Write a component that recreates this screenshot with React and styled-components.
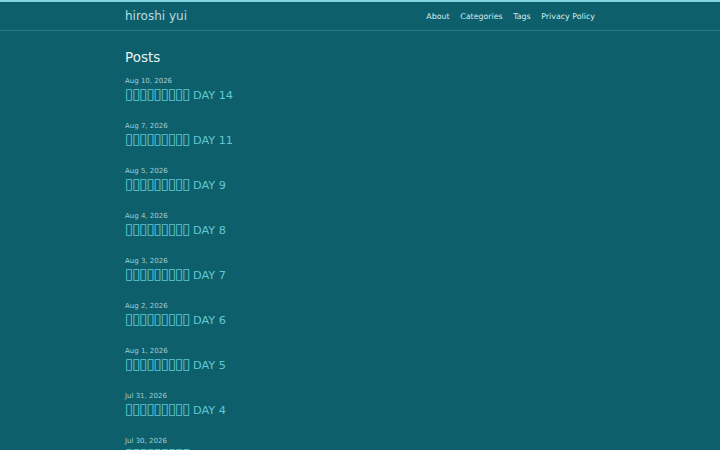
import styled, { createGlobalStyle } from "styled-components";

const posts = [
    { date: "Aug 10, 2026", day: 14 },
    { date: "Aug 7, 2026", day: 11 },
    { date: "Aug 5, 2026", day: 9 },
    { date: "Aug 4, 2026", day: 8 },
    { date: "Aug 3, 2026", day: 7 },
    { date: "Aug 2, 2026", day: 6 },
    { date: "Aug 1, 2026", day: 5 },
    { date: "Jul 31, 2026", day: 4 },
    { date: "Jul 30, 2026", day: 3 },
];

const menu = ["About", "Categories", "Tags", "Privacy Policy"];

export default function App() {
    return (
        <Page>
            <GlobalStyle />
            <Header>
                <HeaderInner>
                    <SiteTitle>hiroshi yui</SiteTitle>
                    <Nav>
                        {menu.map((item) => (
                            <NavLink key={item} href="#">{item}</NavLink>
                        ))}
                    </Nav>
                </HeaderInner>
            </Header>
            <Main>
                <Heading>Posts</Heading>
                <PostList>
                    {posts.map((p) => (
                        <Post key={p.date}>
                            <PostDate>{p.date}</PostDate>
                            <PostTitle href="#">
                                <Tofu>▯▯▯▯▯▯▯▯▯</Tofu> DAY {p.day}
                            </PostTitle>
                        </Post>
                    ))}
                </PostList>
            </Main>
        </Page>
    );
}

const GlobalStyle = createGlobalStyle`
    html, body {
        margin: 0;
        padding: 0;
        background: #0d5f6b;
    }
    body {
        font-family: 'DejaVu Sans', 'Noto Sans CJK JP', sans-serif;
    }
`;

const Page = styled.div`
    min-height: 450px;
    background: #0d5f6b;
    border-top: 2px solid #7fd6de;
    overflow: hidden;
`;

const Header = styled.header`
    border-bottom: 1px solid #2c7883;
`;

const HeaderInner = styled.div`
    width: 470px;
    height: 28px;
    margin: 0 auto;
    display: flex;
    align-items: center;
    justify-content: space-between;
`;

const SiteTitle = styled.a`
    font-size: 12px;
    color: #b9dde1;
    text-decoration: none;
`;

const Nav = styled.nav`
    display: flex;
    gap: 10.5px;
`;

const NavLink = styled.a`
    font-size: 7.9px;
    color: #d6ecee;
    text-decoration: none;
`;

const Main = styled.main`
    width: 470px;
    margin: 0 auto;
    padding-top: 18px;
`;

const Heading = styled.h1`
    margin: 0 0 10px;
    font-size: 13.5px;
    line-height: 17px;
    font-weight: normal;
    color: #e6f2f3;
`;

const PostList = styled.div`
    display: flex;
    flex-direction: column;
    gap: 18px;
`;

const Post = styled.article`
    display: flex;
    flex-direction: column;
    gap: 3px;
`;

const PostDate = styled.time`
    font-size: 7px;
    line-height: 10px;
    color: #a6cdd1;
`;

const PostTitle = styled.a`
    display: block;
    height: 14px;
    font-size: 11.25px;
    line-height: 14px;
    color: #62c8d2;
    text-decoration: none;
    white-space: nowrap;
`;

const Tofu = styled.span`
    font-family: 'DejaVu Sans', sans-serif;
    font-size: 15px;
    line-height: 0;
    letter-spacing: -1.1px;
`;
